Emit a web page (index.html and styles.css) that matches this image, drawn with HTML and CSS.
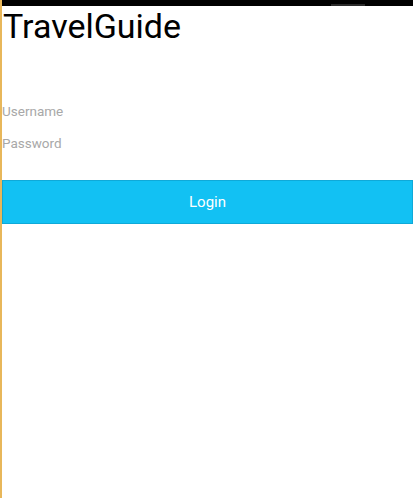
FILE: index.html
```html
<!DOCTYPE html>
<html>
<head>
<meta charset="utf-8">
<link rel="stylesheet" href="styles.css">
</head>
<body>
<div class="screen">
  <div class="statusbar"><span class="status-icons"></span></div>
  <h1 class="title">TravelGuide</h1>
  <div class="form">
    <input class="field" type="text" placeholder="Username">
    <input class="field" type="password" placeholder="Password">
  </div>
  <button class="login">Login</button>
</div>
</body>
</html>
```
FILE: styles.css
```css
html, body {
  margin: 0;
  padding: 0;
  background: #ffffff;
  height: 100%;
}
.screen {
  min-height: 498px;
  border-left: 2px solid #e8b75a;
  font-family: Roboto, "Noto Sans", sans-serif;
  box-sizing: border-box;
}
.statusbar {
  height: 6px;
  background: #000;
  display: flex;
  justify-content: flex-end;
  align-items: center;
  padding-right: 48px;
}
.status-icons {
  width: 34px;
  height: 2px;
  margin-top: 4px;
  background: #2a2a2a;
}
.title {
  margin: 0;
  padding-left: 1px;
  font-weight: 400;
  font-size: 34px;
  line-height: 40px;
  color: #000;
}
.form {
  display: flex;
  flex-direction: column;
  margin-top: 53px;
  gap: 8px;
}
.field {
  border: none;
  outline: none;
  padding: 0;
  margin: 0;
  height: 24px;
  font-family: Roboto, "Noto Sans", sans-serif;
  font-size: 13.5px;
  color: #333;
  background: transparent;
}
.field::placeholder {
  color: #a8a8a8;
}
.login {
  display: block;
  width: 100%;
  margin-top: 25px;
  height: 44px;
  background: #12c1f3;
  border: 1px solid #0fa9d8;
  color: #fff;
  font-family: Roboto, "Noto Sans", sans-serif;
  font-size: 15px;
  padding: 0;
}
```
